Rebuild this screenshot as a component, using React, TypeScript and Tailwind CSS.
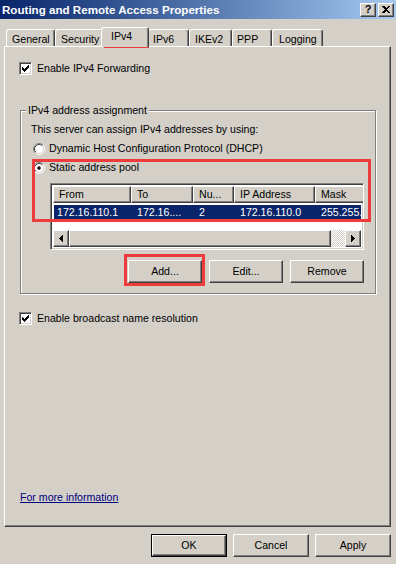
import type { ReactNode } from "react";

const raised =
  "border border-t-white border-l-white border-r-[#404040] border-b-[#404040] shadow-[inset_-1px_-1px_0_#808080]";
const sunken =
  "border border-t-[#808080] border-l-[#808080] border-r-white border-b-white shadow-[inset_1px_1px_0_#404040,inset_-1px_-1px_0_#d4d0c8]";

function CheckBox() {
  return (
    <span className={`flex h-[13px] w-[13px] shrink-0 items-center justify-center bg-white ${sunken}`}>
      <svg width="7" height="7" viewBox="0 0 7 7" shapeRendering="crispEdges">
        <path
          fill="#000"
          d="M6 0h1v1h-1z M5 1h2v1h-2z M0 2h1v1h-1z M4 2h3v1h-3z M0 3h2v1h-2z M3 3h3v1h-3z M0 4h5v1h-5z M1 5h3v1h-3z M2 6h1v1h-1z"
        />
      </svg>
    </span>
  );
}

function Radio({ on }: { on?: boolean }) {
  return (
    <svg width="12" height="12" viewBox="0 0 12 12" className="shrink-0">
      <circle cx="6" cy="6" r="5" fill="#fff" />
      <path d="M2.11 9.89A5.5 5.5 0 0 1 9.89 2.11" fill="none" stroke="#808080" />
      <path d="M9.89 2.11A5.5 5.5 0 0 1 2.11 9.89" fill="none" stroke="#fff" />
      <path d="M2.82 9.18A4.5 4.5 0 0 1 9.18 2.82" fill="none" stroke="#404040" />
      <path d="M9.18 2.82A4.5 4.5 0 0 1 2.82 9.18" fill="none" stroke="#d4d0c8" />
      {on && <circle cx="6" cy="6" r="1.8" fill="#000" />}
    </svg>
  );
}

function Tab({ label, w, pl, selected, extra = "" }: { label: string; w: string; pl: string; selected?: boolean; extra?: string }) {
  return (
    <div
      className={`${w} ${pl} ${extra} shrink-0 rounded-t-[3px] border-l border-t border-r border-l-white border-t-white border-r-[#404040] bg-[#d4d0c8] shadow-[inset_-1px_0_0_#808080] ${
        selected ? "relative z-10 mb-[-1px] h-[20px] pt-[2px]" : "h-[17px] pt-[3px]"
      }`}
    >
      {label}
    </div>
  );
}

function Btn({ children, w = "w-[74px]", h = "h-[23px]", def }: { children: ReactNode; w?: string; h?: string; def?: boolean }) {
  const inner = (
    <div className={`flex h-full w-full items-center justify-center bg-[#d4d0c8] ${raised}`}>{children}</div>
  );
  return def ? (
    <div className={`${w} ${h} border border-black`}>{inner}</div>
  ) : (
    <div className={`${w} ${h}`}>{inner}</div>
  );
}

function Arrow({ right }: { right?: boolean }) {
  return (
    <div className={`flex h-full w-[16px] shrink-0 items-center justify-center bg-[#d4d0c8] ${raised}`}>
      <svg width="4" height="7" viewBox="0 0 4 7" shapeRendering="crispEdges">
        <path d={right ? "M0 0L4 3.5L0 7z" : "M4 0L0 3.5L4 7z"} fill="#000" />
      </svg>
    </div>
  );
}

const cols = [
  { head: "From", cell: "172.16.110.1", w: "w-[78px]" },
  { head: "To", cell: "172.16....", w: "w-[62px]" },
  { head: "Nu...", cell: "2", w: "w-[41px]" },
  { head: "IP Address", cell: "172.16.110.0", w: "w-[81px]" },
  { head: "Mask", cell: "255.255.", w: "w-[100px]" },
];

export default function App() {
  return (
    <div className="relative h-[564px] w-[396px] overflow-hidden bg-[#d4d0c8] font-['Liberation_Sans',Arial,sans-serif] text-[10.6px] leading-[13px] text-black">
      {/* title bar */}
      <div className="flex h-[19px] items-center justify-between bg-gradient-to-r from-[#0a246a] to-[#a6caf0] pl-[2px] pr-[2px]">
        <span className="text-[11.6px] font-bold text-white">Routing and Remote Access Properties</span>
        <div className="flex gap-[2px]">
          <div className={`flex h-[14px] w-[16px] items-center justify-center bg-[#d4d0c8] text-[11px] font-bold ${raised}`}>?</div>
          <div className={`flex h-[14px] w-[16px] items-center justify-center bg-[#d4d0c8] ${raised}`}>
            <svg width="8" height="7" viewBox="0 0 8 7" shapeRendering="crispEdges">
              <path fill="#000" d="M0 0h2l2 2 2-2h2L5 3.5 8 7H6L4 5 2 7H0l3-3.5z" />
            </svg>
          </div>
        </div>
      </div>

      {/* tabs */}
      <div className="mt-[8px] flex h-[19px] items-end pl-[6px]">
        <Tab label="General" w="w-[49px]" pl="pl-[5px]" />
        <Tab label="Security" w="w-[48px]" pl="pl-[5px]" />
        <Tab label="IPv4" w="w-[48px]" pl="pl-[9px]" selected extra="ml-[-2px] mr-[-1px]" />
        <Tab label="IPv6" w="w-[41px]" pl="pl-[4px]" />
        <Tab label="IKEv2" w="w-[43px]" pl="pl-[5px]" />
        <Tab label="PPP" w="w-[40px]" pl="pl-[4px]" />
        <Tab label="Logging" w="w-[51px]" pl="pl-[6px]" />
      </div>

      {/* tab pane */}
      <div className="ml-[4px] flex h-[481px] w-[387px] flex-col border border-t-white border-l-white border-r-[#404040] border-b-[#404040] pb-[22px] pl-[14px] shadow-[inset_-1px_-1px_0_#808080]">
        <div className="mt-[15px] flex items-center gap-[5px]">
          <CheckBox />
          <span>Enable IPv4 Forwarding</span>
        </div>

        <fieldset className="ml-[1px] mt-[29px] w-[356px] border border-[#808080] pb-[10px] pl-[10px] pt-[6px] shadow-[inset_1px_1px_0_#fff,1px_1px_0_#fff]">
          <legend className="ml-[-5px] bg-[#d4d0c8] px-[2px]">IPv4 address assignment</legend>
          <div>This server can assign IPv4 addresses by using:</div>
          <div className="ml-[2px] mt-[6px] flex h-[13px] items-center gap-[4px]">
            <Radio />
            <span>Dynamic Host Configuration Protocol (DHCP)</span>
          </div>
          <div className="ml-[2px] mt-[6px] flex h-[13px] items-center gap-[4px]">
            <Radio on />
            <span>Static address pool</span>
          </div>

          <div className="ml-[19px] mt-[9px] w-[314px]">
            {/* list view */}
            <div className={`flex h-[67px] flex-col overflow-hidden bg-white p-[2px] ${sunken}`}>
              <div className="flex h-[17px] shrink-0">
                {cols.map((c) => (
                  <div key={c.head} className={`${c.w} shrink-0 bg-[#d4d0c8] pl-[5px] pt-[1px] ${raised}`}>
                    {c.head}
                  </div>
                ))}
              </div>
              <div className="ml-[1px] mt-[2px] flex h-[14px] shrink-0 items-center bg-[#0a246a] text-white">
                {cols.map((c, i) => (
                  <div key={c.head} className={`${c.w} shrink-0 whitespace-nowrap ${i === 0 ? "pl-[3px]" : "pl-[5px]"}`}>
                    {c.cell}
                  </div>
                ))}
              </div>
              <div className="mt-auto flex h-[17px] shrink-0">
                <Arrow />
                <div className={`flex-1 bg-[#d4d0c8] ${raised}`} />
                <div className="w-[14px] bg-[repeating-conic-gradient(#fff_0_25%,#d4d0c8_0_50%)] bg-[length:2px_2px]" />
                <Arrow right />
              </div>
            </div>

            <div className="mt-[10px] flex justify-end gap-[7px]">
              <Btn>Add...</Btn>
              <Btn>Edit...</Btn>
              <Btn>Remove</Btn>
            </div>
          </div>
        </fieldset>

        <div className="mt-[18px] flex items-center gap-[5px]">
          <CheckBox />
          <span>Enable broadcast name resolution</span>
        </div>

        <a className="ml-[1px] mt-auto w-fit text-[#000080] underline">For more information</a>
      </div>

      {/* dialog buttons */}
      <div className="mt-[7px] flex justify-end gap-[6px] pr-[5px]">
        <Btn w="w-[76px]" def>OK</Btn>
        <Btn w="w-[76px]">Cancel</Btn>
        <Btn w="w-[76px]">Apply</Btn>
      </div>

      {/* red annotation boxes */}
      <div className="absolute left-[104px] top-[28px] h-[20px] w-[45px] border-[3px] border-[#ee3b3b]" />
      <div className="absolute left-[32px] top-[159px] h-[63px] w-[339px] border-[3px] border-[#ee3b3b]" />
      <div className="absolute left-[124px] top-[254px] h-[32px] w-[81px] border-[3px] border-[#ee3b3b]" />
    </div>
  );
}
